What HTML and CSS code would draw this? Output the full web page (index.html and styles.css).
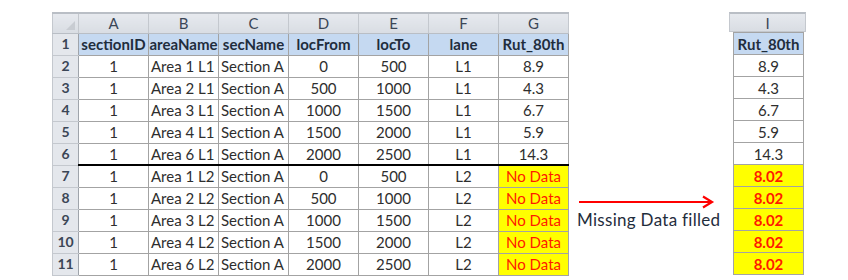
FILE: index.html
```html
<!DOCTYPE html>
<html>
<head>
<meta charset="utf-8">
<link rel="stylesheet" href="styles.css">
</head>
<body>
<div class="page">
  <table class="sheet main">
    <thead>
      <tr class="colhdr">
        <th class="corner"><span class="tri"></span></th>
        <th>A</th><th>B</th><th>C</th><th>D</th><th>E</th><th>F</th><th>G</th>
      </tr>
    </thead>
    <tbody>
      <tr class="hdr">
        <th class="rn">1</th>
        <td>sectionID</td><td>areaName</td><td>secName</td><td>locFrom</td><td>locTo</td><td>lane</td><td>Rut_80th</td>
      </tr>
      <tr><th class="rn">2</th><td>1</td><td class="l">Area 1 L1</td><td class="l">Section A</td><td>0</td><td>500</td><td>L1</td><td>8.9</td></tr>
      <tr><th class="rn">3</th><td>1</td><td class="l">Area 2 L1</td><td class="l">Section A</td><td>500</td><td>1000</td><td>L1</td><td>4.3</td></tr>
      <tr><th class="rn">4</th><td>1</td><td class="l">Area 3 L1</td><td class="l">Section A</td><td>1000</td><td>1500</td><td>L1</td><td>6.7</td></tr>
      <tr><th class="rn">5</th><td>1</td><td class="l">Area 4 L1</td><td class="l">Section A</td><td>1500</td><td>2000</td><td>L1</td><td>5.9</td></tr>
      <tr class="split"><th class="rn">6</th><td>1</td><td class="l">Area 6 L1</td><td class="l">Section A</td><td>2000</td><td>2500</td><td>L1</td><td>14.3</td></tr>
      <tr><th class="rn">7</th><td>1</td><td class="l">Area 1 L2</td><td class="l">Section A</td><td>0</td><td>500</td><td>L2</td><td class="nd">No Data</td></tr>
      <tr><th class="rn">8</th><td>1</td><td class="l">Area 2 L2</td><td class="l">Section A</td><td>500</td><td>1000</td><td>L2</td><td class="nd">No Data</td></tr>
      <tr><th class="rn">9</th><td>1</td><td class="l">Area 3 L2</td><td class="l">Section A</td><td>1000</td><td>1500</td><td>L2</td><td class="nd">No Data</td></tr>
      <tr><th class="rn">10</th><td>1</td><td class="l">Area 4 L2</td><td class="l">Section A</td><td>1500</td><td>2000</td><td>L2</td><td class="nd">No Data</td></tr>
      <tr><th class="rn">11</th><td>1</td><td class="l">Area 6 L2</td><td class="l">Section A</td><td>2000</td><td>2500</td><td>L2</td><td class="nd">No Data</td></tr>
    </tbody>
  </table>

  <div class="note">
    <svg class="arrow" width="136" height="14" viewBox="0 0 136 14">
      <line x1="0" y1="7" x2="132" y2="7" stroke="#ff0000" stroke-width="2.2"/>
      <polyline points="124,1.5 133,7 124,12.5" fill="none" stroke="#ff0000" stroke-width="2.2"/>
    </svg>
    <span class="note-text">Missing Data filled</span>
  </div>

  <div class="right">
    <div class="colhdr-single">I</div>
    <table class="sheet single">
      <tbody>
        <tr class="hdr"><td>Rut_80th</td></tr>
        <tr><td>8.9</td></tr>
        <tr><td>4.3</td></tr>
        <tr><td>6.7</td></tr>
        <tr><td>5.9</td></tr>
        <tr><td>14.3</td></tr>
        <tr><td class="fill">8.02</td></tr>
        <tr><td class="fill">8.02</td></tr>
        <tr><td class="fill">8.02</td></tr>
        <tr><td class="fill">8.02</td></tr>
        <tr><td class="fill">8.02</td></tr>
      </tbody>
    </table>
  </div>
</div>
</body>
</html>
```

FILE: styles.css
```css
html, body {
  margin: 0;
  padding: 0;
  background: #ffffff;
}

body {
  font-family: Lato, "Open Sans", sans-serif;
  color: #2e2e2e;
}

.page {
  display: flex;
  align-items: flex-start;
  padding: 12px 0 0 52px;
  width: 848px;
  height: 280px;
  box-sizing: border-box;
}

.sheet {
  border-collapse: collapse;
  table-layout: fixed;
  font-size: 15px;
}

.sheet th,
.sheet td {
  height: 22px;
  padding: 0;
  text-align: center;
  white-space: nowrap;
  overflow: hidden;
  line-height: 20px;
  box-sizing: border-box;
}

.sheet td {
  border: 1px solid #a3a3a3;
  width: 70px;
}

.sheet td.l {
  text-align: left;
  padding-left: 2px;
}

.main thead tr th {
  height: 20px;
  line-height: 18px;
  background: linear-gradient(#e6e9ee, #d9dde3);
  border-left: 1px solid #c4c8ce;
  border-right: 1px solid #c4c8ce;
  border-top: 2px solid #b9bec5;
  border-bottom: 1px solid #b9bec5;
  font-weight: normal;
  color: #3b4656;
  width: 70px;
  font-size: 15px;
}

.main thead tr th.corner {
  width: 26px;
  position: relative;
}

.tri {
  position: absolute;
  right: 3px;
  bottom: 3px;
  width: 0;
  height: 0;
  border-left: 9px solid transparent;
  border-bottom: 9px solid #c8ccd2;
}

.main th.rn {
  width: 26px;
  background: #e4e7ec;
  border: 1px solid #c4c8ce;
  border-right: 1px solid #9fa4ab;
  color: #3b4656;
  font-weight: bold;
  font-size: 14px;
}

.sheet tr.hdr td {
  background: #c5d9f1;
  font-weight: bold;
  color: #1f2d3d;
}

.main tr.split td {
  border-bottom: 2px solid #000000;
}

.nd {
  background: #ffff00;
  color: #ff1a00;
}

.fill {
  background: #ffff00;
  color: #ff1a00;
  font-weight: bold;
}

.note {
  display: flex;
  flex-direction: column;
  align-items: flex-start;
  width: 160px;
  padding: 183px 0 0 8px;
  box-sizing: border-box;
}

.arrow {
  display: block;
  margin-left: 2px;
}

.note-text {
  font-size: 17px;
  line-height: 20px;
  color: #1f2d3d;
  margin-top: 1px;
  letter-spacing: 0.3px;
  white-space: nowrap;
}

.right {
  display: flex;
  flex-direction: column;
  align-items: flex-start;
}

.colhdr-single {
  width: 77px;
  height: 20px;
  line-height: 18px;
  box-sizing: border-box;
  text-align: center;
  font-size: 15px;
  color: #3b4656;
  background: linear-gradient(#e6e9ee, #d9dde3);
  border: 1px solid #c4c8ce;
  border-top: 2px solid #b9bec5;
}

.single {
  margin-left: 4px;
}
```
